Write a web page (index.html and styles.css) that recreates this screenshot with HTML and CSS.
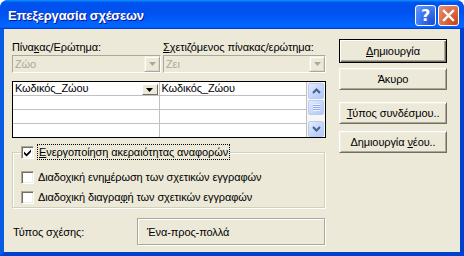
FILE: index.html
```html
<!DOCTYPE html>
<html lang="el">
<head>
    <meta charset="UTF-8">
    <title>Επεξεργασία σχέσεων</title>
    <link rel="stylesheet" href="styles.css">
</head>
<body>
    <div class="window">
        <div class="titlebar">
            <span class="title">Επεξεργασία σχέσεων</span>
            <div class="title-buttons">
                <span class="tbtn help">?</span>
                <span class="tbtn close">
                    <svg width="13" height="13" viewBox="0 0 13 13"><path d="M2 2 L11 11 M11 2 L2 11" stroke="#fff" stroke-width="2.4" stroke-linecap="square"/></svg>
                </span>
            </div>
        </div>

        <div class="frame">
            <div class="main">
                <!-- table / related table -->
                <div class="fields">
                    <div class="field left">
                        <div class="label">Πίνα<u>κ</u>ας/Ερώτημα:</div>
                        <div class="combo">
                            <span class="combo-text">Ζώο</span>
                            <span class="drop"><svg width="7" height="4" viewBox="0 0 7 4"><path d="M0 0 H7 L3.5 4 Z" fill="#ACA899"/></svg></span>
                        </div>
                    </div>
                    <div class="field right">
                        <div class="label"><u>Σ</u>χετιζόμενος πίνακας/ερώτημα:</div>
                        <div class="combo">
                            <span class="combo-text">Ζει</span>
                            <span class="drop"><svg width="7" height="4" viewBox="0 0 7 4"><path d="M0 0 H7 L3.5 4 Z" fill="#ACA899"/></svg></span>
                        </div>
                    </div>
                </div>

                <!-- field pairs -->
                <div class="grid">
                    <div class="col col-left">
                        <div class="row">
                            <span class="cell-text">Κωδικός_Ζώου</span>
                            <span class="mini-drop"><svg width="7" height="4" viewBox="0 0 7 4"><path d="M0 0 H7 L3.5 4 Z" fill="#000"/></svg></span>
                        </div>
                        <div class="row"></div>
                        <div class="row"></div>
                        <div class="row last"></div>
                    </div>
                    <div class="col col-right">
                        <div class="row"><span class="cell-text">Κωδικός_Ζώου</span></div>
                        <div class="row"></div>
                        <div class="row"></div>
                        <div class="row last"></div>
                    </div>
                    <div class="scrollbar">
                        <span class="sb-btn">
                            <svg width="9" height="6" viewBox="0 0 9 6"><path d="M1 5 L4.5 1.5 L8 5" fill="none" stroke="#4D6185" stroke-width="2"/></svg>
                        </span>
                        <span class="sb-thumb"><span class="grip"></span></span>
                        <span class="sb-track"></span>
                        <span class="sb-btn">
                            <svg width="9" height="6" viewBox="0 0 9 6"><path d="M1 1 L4.5 4.5 L8 1" fill="none" stroke="#4D6185" stroke-width="2"/></svg>
                        </span>
                    </div>
                </div>

                <!-- referential integrity -->
                <fieldset class="group">
                    <legend class="check-row">
                        <span class="checkbox">
                            <svg width="9" height="9" viewBox="0 0 9 9"><path d="M1 3.5 L3.5 6 L8 1.5 V4 L3.5 8.5 L1 6 Z" fill="#000"/></svg>
                        </span>
                        <span class="focus"><u>Ε</u>νεργοποίηση ακεραιότητας αναφορών</span>
                    </legend>
                    <div class="check-row">
                        <span class="checkbox"></span>
                        <span>Διαδοχική ενη<u>μ</u>έρωση των σχετικών εγγραφών</span>
                    </div>
                    <div class="check-row">
                        <span class="checkbox"></span>
                        <span>Διαδοχική διαγρα<u>φ</u>ή των σχετικών εγγραφών</span>
                    </div>
                </fieldset>

                <div class="type-row">
                    <span class="type-label">Τύπος σχέσης:</span>
                    <span class="type-box">Ένα-προς-πολλά</span>
                </div>
            </div>

            <div class="side">
                <button class="btn default"><u>Δ</u>ημιουργία</button>
                <button class="btn cancel">Άκυρο</button>
                <button class="btn join"><u>Τ</u>ύπος συνδέσμου..</button>
                <button class="btn new">Δημιουργία <u>ν</u>έου..</button>
            </div>
        </div>
    </div>
</body>
</html>
```

FILE: styles.css
```css
/* Common styles */
* {
    box-sizing: border-box;
}

body {
    margin: 0;
    background-color: #fff;
    font-family: "Liberation Sans", Arial, sans-serif;
    font-size: 11px;
    letter-spacing: -0.1px;
    color: #000;
}

u {
    text-decoration: underline;
    text-underline-offset: 1px;
}

/* Window frame */
.window {
    width: 464px;
    height: 256px;
    display: flex;
    flex-direction: column;
    border-radius: 8px 8px 0 0;
    overflow: hidden;
    background-color: #0054E3;
}

.titlebar {
    height: 29px;
    flex: none;
    display: flex;
    align-items: center;
    padding: 0 5px 0 8px;
    background: linear-gradient(180deg, #0997ff, #0053ee 8%, #0050ee 40%, #0066ff 88%, #0066ff 93%, #005bff 95%, #003dd7 96%, #003dd7);
}

.title {
    color: #fff;
    font-weight: bold;
    font-size: 13px;
    letter-spacing: -0.2px;
    text-shadow: 1px 1px #0f1089;
    margin-top: 1px;
}

.title-buttons {
    margin-left: auto;
    display: flex;
    gap: 2px;
    margin-top: 1px;
}

.tbtn {
    width: 21px;
    height: 21px;
    border: 1px solid #fff;
    border-radius: 3px;
    display: flex;
    align-items: center;
    justify-content: center;
}

.help {
    background: radial-gradient(circle at 90% 90%, #1c4fd9 0%, #3b75f2 55%, #6b9cf7 100%);
    color: #fff;
    font-weight: bold;
    font-size: 16px;
    font-family: "DejaVu Sans", sans-serif;
}

.close {
    background: radial-gradient(circle at 90% 90%, #cc4614 0%, #dc6b4a 55%, #e9937a 100%);
}

.frame {
    flex: 1;
    display: flex;
    align-items: flex-start;
    background-color: #ECE9D8;
    border: 4px solid #0054E3;
    border-top: 0;
    border-left-color: #0a5be4;
    border-right-color: #0041d0;
    border-bottom-color: #0041d0;
    padding: 10px 0 0 8px;
}

/* Left part */
.main {
    width: 314px;
    padding-top: 2px;
}

.fields {
    display: flex;
    gap: 1px;
}

.field.left {
    width: 150px;
}

.field.right {
    flex: 1;
}

.label {
    height: 13px;
    line-height: 13px;
    white-space: nowrap;
}

.combo {
    margin-top: 1px;
    height: 18px;
    display: flex;
    align-items: center;
    border: 1px solid;
    border-color: #ACA899 #fff #fff #ACA899;
    background-color: #ECE9D8;
    color: #ACA899;
}

.field.left .combo {
    margin-right: 1px;
}

.combo-text {
    padding-left: 2px;
}

.drop {
    margin-left: auto;
    width: 16px;
    height: 16px;
    display: flex;
    align-items: center;
    justify-content: center;
    background-color: #ECE9D8;
    border: 1px solid;
    border-color: #F1EFE2 #ACA899 #ACA899 #F1EFE2;
    box-shadow: inset 1px 1px #fff, inset -1px -1px #dcd9c8;
}

/* Field pair grid */
.grid {
    margin-top: 8px;
    height: 57px;
    display: flex;
    border: 1px solid #000;
    background-color: #fff;
}

.col {
    display: flex;
    flex-direction: column;
    border-right: 1px solid #C0C0C0;
}

.col-left {
    width: 147px;
}

.col-right {
    width: 148px;
}

.row {
    height: 14px;
    display: flex;
    align-items: flex-start;
    border-bottom: 1px solid #C0C0C0;
}

.row.last {
    flex: 1;
    border-bottom: 0;
}

.cell-text {
    padding-left: 2px;
    line-height: 13px;
}

.mini-drop {
    margin: 2px 1px 0 auto;
    width: 16px;
    height: 11px;
    display: flex;
    align-items: center;
    justify-content: center;
    background-color: #ECE9D8;
    border: 1px solid;
    border-color: #fff #716F64 #716F64 #fff;
}

.scrollbar {
    flex: 1;
    display: flex;
    flex-direction: column;
    padding: 1px 1px 0 1px;
    background-color: #F7F6F1;
}

.sb-btn,
.sb-thumb {
    width: 16px;
    height: 16px;
    flex: none;
    display: flex;
    align-items: center;
    justify-content: center;
    border: 1px solid #B8CCF5;
    border-radius: 2px;
    background: linear-gradient(135deg, #e4ecfe, #c1d4fb 60%, #b1c8f8);
}

.sb-thumb {
    margin-top: 1px;
    height: 15px;
}

.grip {
    width: 7px;
    height: 7px;
    background: repeating-linear-gradient(180deg, #eef3fe 0, #eef3fe 1px, #8caaee 1px, #8caaee 2px);
}

.sb-track {
    flex: 1;
}

/* Integrity group */
.group {
    margin: 6px 0 0;
    width: 313px;
    min-width: 0;
    padding: 7px 8px 0 8px;
    border: 1px solid #D0D0BF;
    box-shadow: inset 1px 1px #fff, 1px 1px #fff;
}

.group legend {
    padding: 0;
    background-color: #ECE9D8;
}

.check-row {
    display: flex;
    align-items: center;
    height: 20px;
    white-space: nowrap;
}

legend.check-row {
    height: 16px;
}

.checkbox {
    width: 13px;
    height: 13px;
    flex: none;
    margin-right: 3px;
    display: flex;
    align-items: center;
    justify-content: center;
    background-color: #fff;
    border: 1px solid;
    border-color: #ACA899 #fff #fff #ACA899;
    box-shadow: inset 1px 1px #716F64, inset -1px -1px #F1EFE2;
}

.check-row > span:last-child {
    padding-left: 1px;
}

.focus {
    border: 1px dotted #000;
    line-height: 14px;
    padding-right: 1px;
}

/* Relationship type */
.type-row {
    margin-top: 10px;
    display: flex;
    align-items: center;
}

.type-label {
    width: 125px;
    padding-left: 1px;
}

.type-box {
    width: 188px;
    height: 27px;
    display: flex;
    align-items: center;
    padding-left: 9px;
    border: 1px solid #ACA899;
    box-shadow: inset 1px 1px #fff, 1px 1px #fff;
}

/* Buttons on the right */
.side {
    margin-left: 13px;
    width: 108px;
    display: flex;
    flex-direction: column;
}

.btn {
    height: 22px;
    padding: 0;
    font-family: "Liberation Sans", Arial, sans-serif;
    font-size: 11px;
    letter-spacing: -0.1px;
    color: #000;
    background-color: #ECE9D8;
    border: 1px solid;
    border-color: #fff #716F64 #716F64 #fff;
    box-shadow: inset 1px 1px #F1EFE2, inset -1px -1px #ACA899;
}

.btn.default {
    height: 24px;
    border-color: #000;
    box-shadow: inset 1px 1px #fff, inset -1px -1px #716F64, inset -2px -2px #ACA899;
}

.btn.cancel {
    margin-top: 5px;
}

.btn.join {
    margin-top: 12px;
}

.btn.new {
    margin-top: 7px;
}
```
